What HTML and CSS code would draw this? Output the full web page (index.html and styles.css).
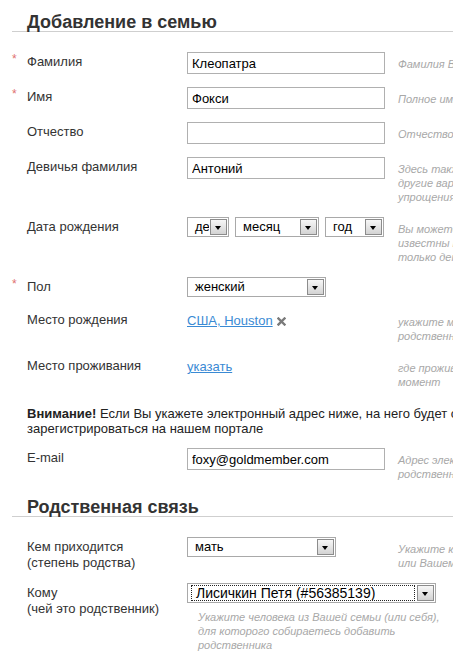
FILE: index.html
```html
<!DOCTYPE html>
<html lang="ru">
<head>
  <meta charset="UTF-8">
  <meta name="viewport" content="width=device-width, initial-scale=1.0">
  <title>Добавление в семью</title>
  <link rel="stylesheet" href="styles.css">
</head>
<body>
  <form class="family-form">
    <h2 class="section-title">Добавление в семью</h2>

    <div class="row">
      <span class="req">*</span>
      <label class="label">Фамилия</label>
      <div class="field"><input type="text" class="input" value="Клеопатра"></div>
      <div class="hint">Фамилия Вашего родственника</div>
    </div>

    <div class="row">
      <span class="req">*</span>
      <label class="label">Имя</label>
      <div class="field"><input type="text" class="input" value="Фокси"></div>
      <div class="hint">Полное имя родственника</div>
    </div>

    <div class="row">
      <span class="req"></span>
      <label class="label">Отчество</label>
      <div class="field"><input type="text" class="input" value=""></div>
      <div class="hint">Отчество родственника</div>
    </div>

    <div class="row">
      <span class="req"></span>
      <label class="label">Девичья фамилия</label>
      <div class="field"><input type="text" class="input" value="Антоний"></div>
      <div class="hint">Здесь также можно указать<br>другие варианты фамилии для<br>упрощения поиска</div>
    </div>

    <div class="row">
      <span class="req"></span>
      <label class="label">Дата рождения</label>
      <div class="field date-group">
        <div class="select select-day"><span class="select-value">день</span><span class="select-btn"></span></div>
        <div class="select select-month"><span class="select-value">месяц</span><span class="select-btn"></span></div>
        <div class="select select-year"><span class="select-value">год</span><span class="select-btn"></span></div>
      </div>
      <div class="hint">Вы можете указать, если<br>известны не все данные,<br>только день и месяц</div>
    </div>

    <div class="row">
      <span class="req">*</span>
      <label class="label">Пол</label>
      <div class="field">
        <div class="select select-sex"><span class="select-value">женский</span><span class="select-btn"></span></div>
      </div>
      <div class="hint"></div>
    </div>

    <div class="row">
      <span class="req"></span>
      <label class="label">Место рождения</label>
      <div class="field field-link">
        <a href="#" class="link">США, Houston</a>
        <a href="#" class="remove" title="удалить">
          <svg width="9" height="9" viewBox="0 0 9 9"><path d="M1.5 1.5 L7.5 7.5 M7.5 1.5 L1.5 7.5" stroke="#7a7a7a" stroke-width="2.4" stroke-linecap="square"/></svg>
        </a>
      </div>
      <div class="hint">укажите место рождения<br>родственника</div>
    </div>

    <div class="row">
      <span class="req"></span>
      <label class="label">Место проживания</label>
      <div class="field field-link"><a href="#" class="link">указать</a></div>
      <div class="hint">где проживает в данный<br>момент</div>
    </div>

    <p class="notice"><b>Внимание!</b> Если Вы укажете электронный адрес ниже, на него будет отправлено приглашение<br>зарегистрироваться на нашем портале</p>

    <div class="row">
      <span class="req"></span>
      <label class="label">E-mail</label>
      <div class="field"><input type="text" class="input" value="foxy@goldmember.com"></div>
      <div class="hint">Адрес электронной почты<br>родственника</div>
    </div>

    <h2 class="section-title">Родственная связь</h2>

    <div class="row row-tight">
      <span class="req"></span>
      <label class="label">Кем приходится<br>(степень родства)</label>
      <div class="field">
        <div class="select select-relation"><span class="select-value">мать</span><span class="select-btn"></span></div>
      </div>
      <div class="hint">Укажите кем приходится Вам<br>или Вашему родственнику</div>
    </div>

    <div class="row">
      <span class="req"></span>
      <label class="label">Кому<br>(чей это родственник)</label>
      <div class="field field-wide">
        <div class="select select-person focused"><span class="select-value">Лисичкин Петя (#56385139)</span><span class="select-btn"></span></div>
        <div class="hint hint-below">Укажите человека из Вашей семьи (или себя),<br>для которого собираетесь добавить<br>родственника</div>
      </div>
    </div>
  </form>
</body>
</html>
```

FILE: styles.css
```css
* {
  margin: 0;
  padding: 0;
  box-sizing: border-box;
}

body {
  background: #fff;
  color: #333;
  font-family: 'Liberation Sans', Arial, sans-serif;
  font-size: 13px;
  overflow: hidden;
}

.family-form {
  width: 700px;
  padding: 8px 0 0 12px;
}

/* section headers with a thin rule underneath */
.section-title {
  font-size: 18px;
  line-height: 18px;
  font-weight: bold;
  color: #333;
  padding-left: 15px;
  margin-top: 17px;
  margin-bottom: 20px;
  border-bottom: 1px solid #cfcfcf;
}

.section-title:first-child {
  margin-top: 5px;
}

.row {
  display: grid;
  grid-template-columns: 15px 160px 211px 300px;
  align-items: start;
  margin-bottom: 13px;
}

.row-tight {
  margin-bottom: 12px;
}

.req {
  color: #e07070;
  font-size: 12px;
  line-height: 12px;
  padding-top: 1px;
}

.label {
  color: #333;
  line-height: 16px;
  padding-top: 2px;
}

.input {
  width: 198px;
  height: 22px;
  border: 1px solid #b0b0b0;
  padding: 0 4px;
  font-family: inherit;
  font-size: 13px;
  color: #000;
  background: #fff;
}

.hint {
  margin-top: 5px;
  color: #a8a8a8;
  font-size: 11px;
  font-style: italic;
  line-height: 14px;
  white-space: nowrap;
}

.hint-below {
  margin-top: 7px;
  padding-left: 11px;
}

.field-wide {
  grid-column: 3 / 5;
}

/* custom drop-downs */
.select {
  display: flex;
  align-items: center;
  height: 20px;
  border: 1px solid #a9a9a9;
  background: #fff;
  color: #000;
}

.select-value {
  flex: 1;
  overflow: hidden;
  white-space: nowrap;
  line-height: 16px;
  padding-left: 7px;
}

.select-btn {
  position: relative;
  flex: none;
  width: 17px;
  height: 16px;
  margin: 0 1px;
  border: 1px solid #8c8c8c;
  background: linear-gradient(#f7f7f7, #d3d3d3);
}

.select-btn::after {
  content: "";
  position: absolute;
  left: 4px;
  top: 6px;
  border-top: 4px solid #000;
  border-left: 3.5px solid transparent;
  border-right: 3.5px solid transparent;
}

.date-group {
  display: flex;
  gap: 6px;
}

.select-day {
  width: 42px;
}

.select-month {
  width: 84px;
}

.select-year {
  width: 59px;
}

.select-sex {
  width: 139px;
}

.select-relation {
  width: 149px;
}

.select-person {
  width: 249px;
}

.select.focused .select-value {
  margin: 0 1px 0 3px;
  padding-left: 4px;
  height: 16px;
  border: 1px dotted #222;
  line-height: 14px;
  font-size: 14px;
}

.field-link {
  display: flex;
  align-items: center;
  gap: 4px;
  padding-top: 3px;
  line-height: 16px;
}

.link {
  color: #3a8ad4;
  text-decoration: underline;
}

.remove {
  display: flex;
}

.notice {
  margin: 17px 0 12px 15px;
  color: #222;
  line-height: 15px;
  white-space: nowrap;
}
```
